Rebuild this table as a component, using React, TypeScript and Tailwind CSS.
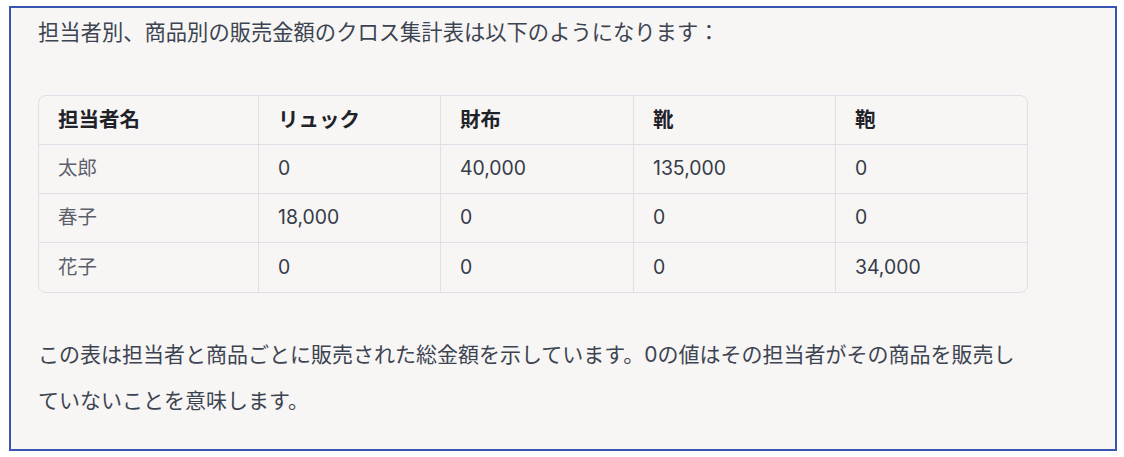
const headers = ['担当者名', 'リュック', '財布', '靴', '鞄'];

const rows: string[][] = [
    ['太郎', '0', '40,000', '135,000', '0'],
    ['春子', '18,000', '0', '0', '0'],
    ['花子', '0', '0', '0', '34,000'],
];

const FONT = '[font-family:Inter,"Noto_Sans_CJK_JP",sans-serif]';

export default function App() {
    return (
        <div className={`w-[1124px] h-[457px] bg-white pt-[6px] pl-[9px] ${FONT}`}>
            <div className="w-[1108px] h-[445px] border-2 border-[#3a55b1] bg-[#f7f6f5] px-[27px]">
                {/* Intro */}
                <p className="pt-[8px] text-[21.3px] leading-[32px] text-[#3d4451]">
                    担当者別、商品別の販売金額のクロス集計表は以下のようになります：
                </p>

                {/* Cross table */}
                <div className="mt-[47px] w-[990px] rounded-lg border border-[#dfdfe5] overflow-hidden">
                    <div className="grid grid-cols-[220px_182px_193px_202px_191px]">
                        {headers.map((h, i) => (
                            <div
                                key={h}
                                className={`h-[49px] flex items-center px-[19px] text-[20.5px] font-bold text-[#1f2329] border-b border-[#dfdfe5] ${i < headers.length - 1 ? 'border-r' : ''}`}
                            >
                                {h}
                            </div>
                        ))}
                        {rows.map((row, r) => row.map((cell, c) => (
                            <div
                                key={`${r}-${c}`}
                                className={`h-[49px] flex items-center px-[19px] text-[19.4px] border-[#dfdfe5] ${c === 0 ? 'text-[#5b606b]' : 'text-[#363c48]'} ${c < row.length - 1 ? 'border-r' : ''} ${r < rows.length - 1 ? 'border-b' : ''}`}
                            >
                                {cell}
                            </div>
                        )))}
                    </div>
                </div>

                {/* Note */}
                <p className="mt-[39px] w-[1010px] text-[21px] leading-[46px] text-[#3d4451]">
                    この表は担当者と商品ごとに販売された総金額を示しています。0の値はその担当者がその商品を販売し
                    <br />
                    ていないことを意味します。
                </p>
            </div>
        </div>
    );
}
